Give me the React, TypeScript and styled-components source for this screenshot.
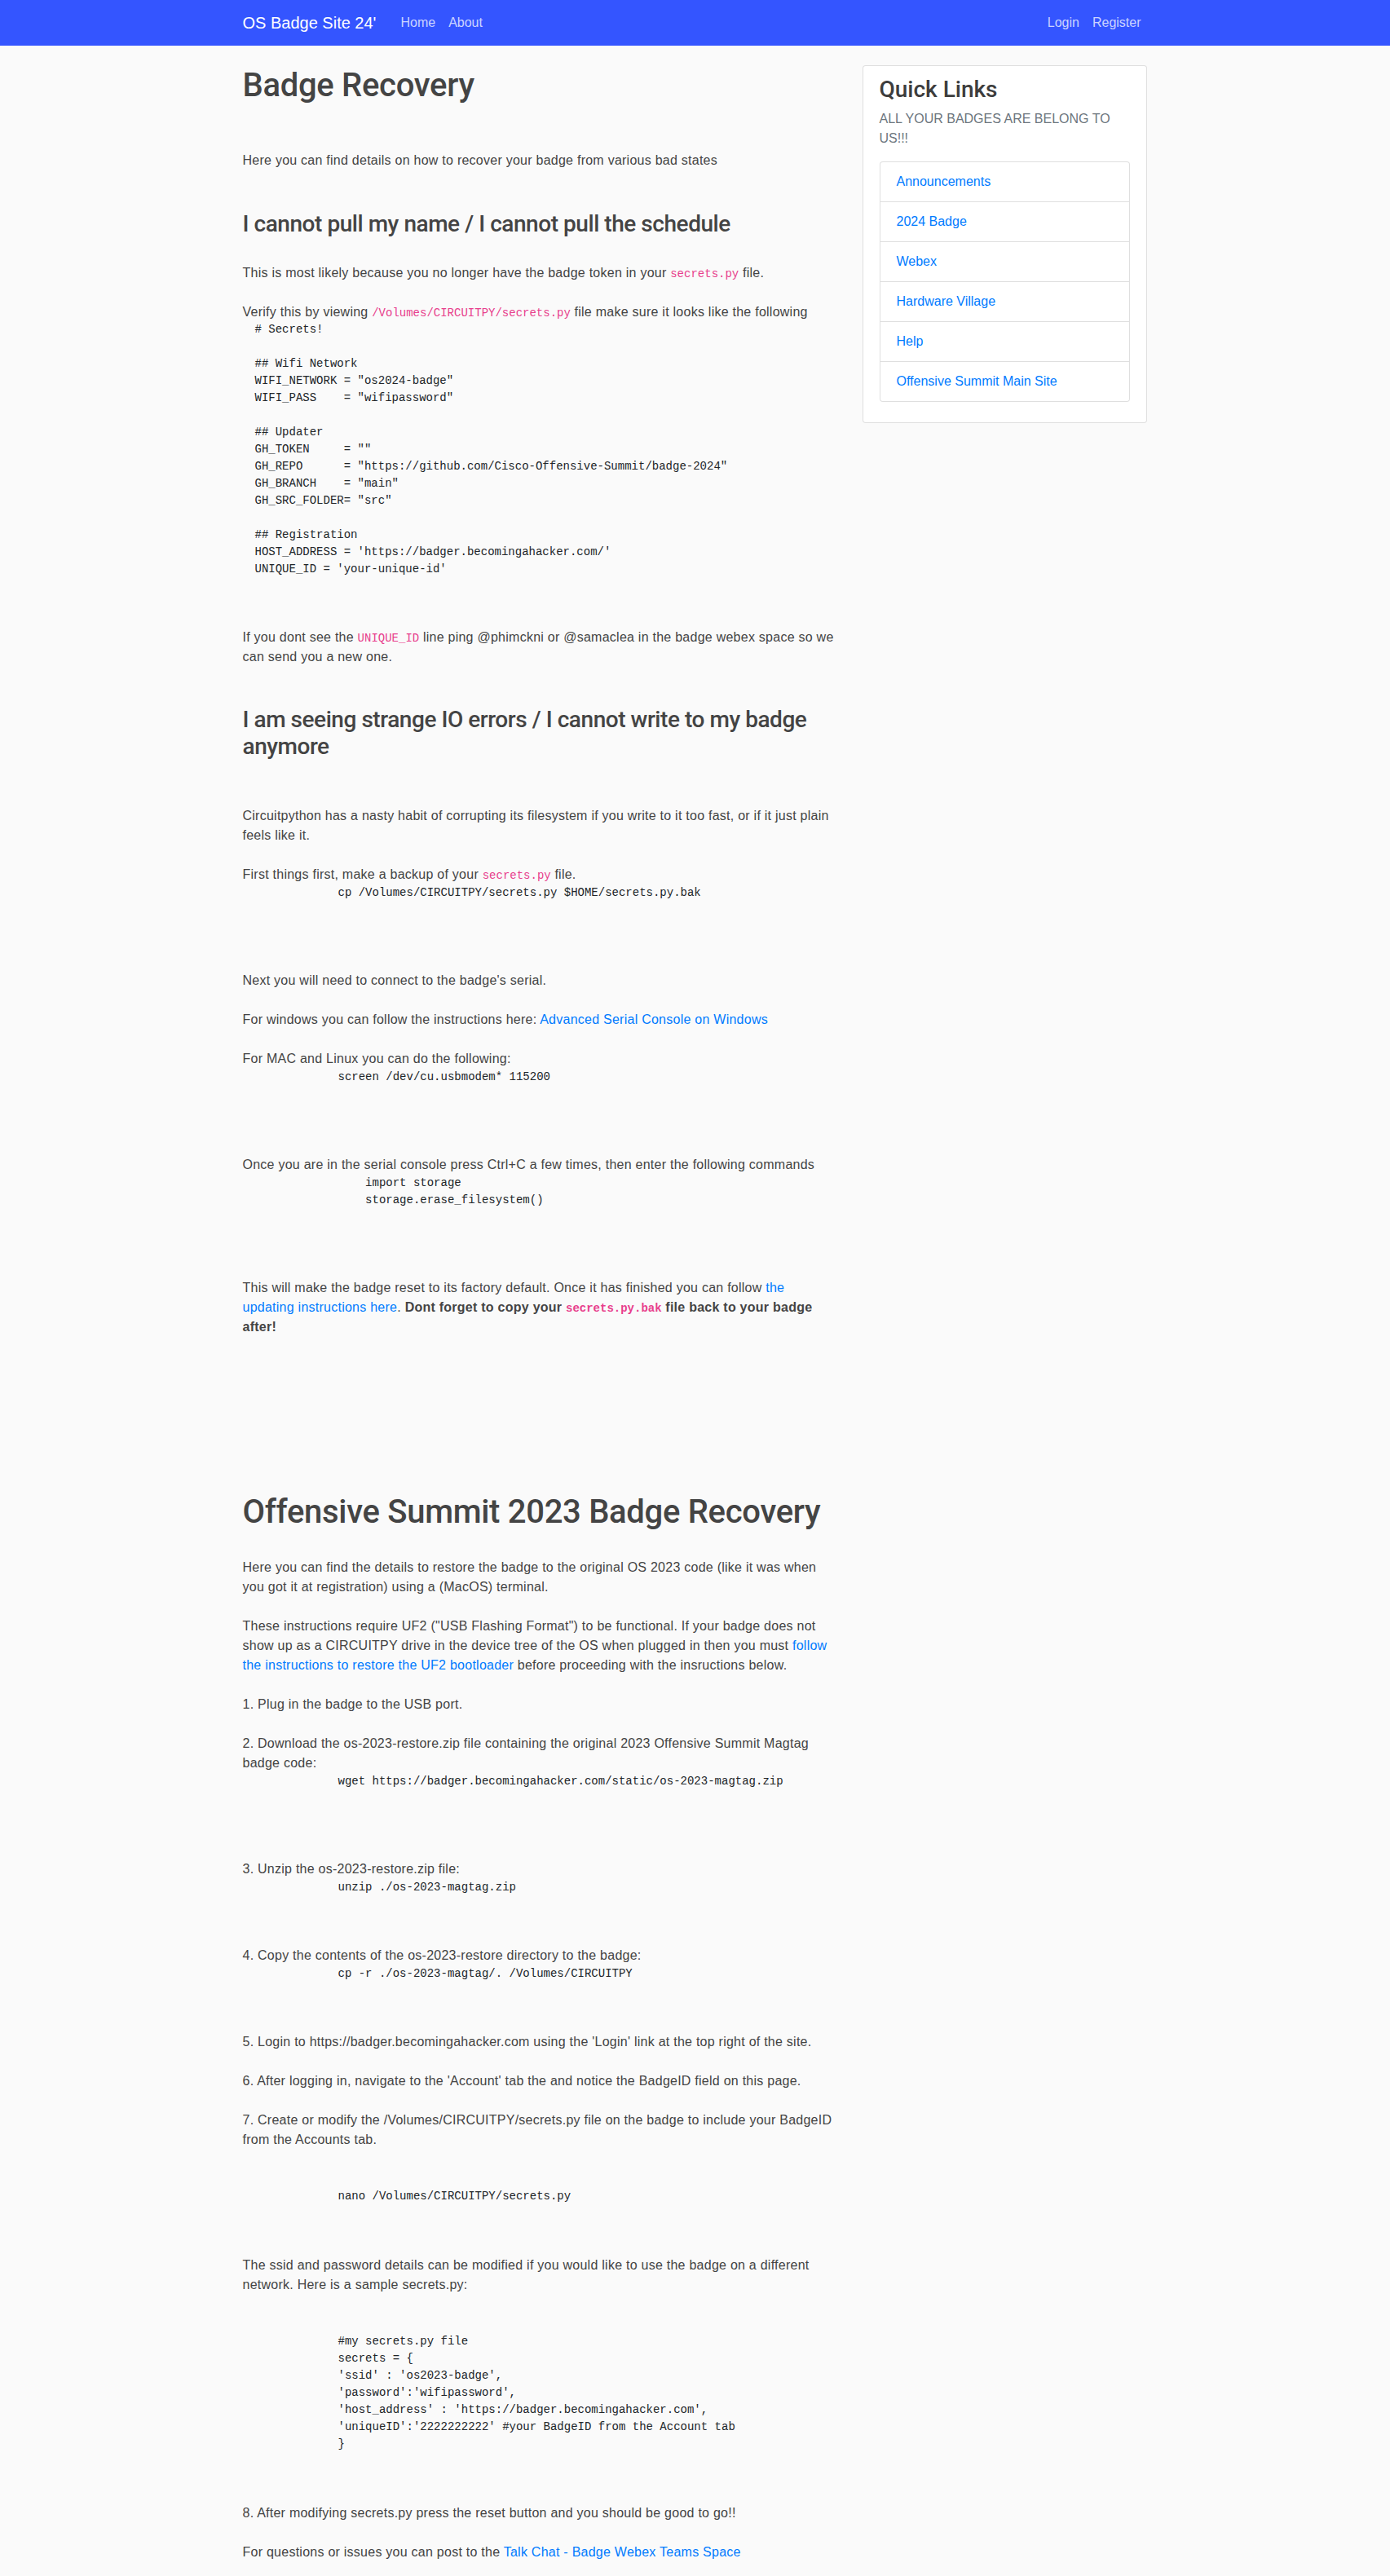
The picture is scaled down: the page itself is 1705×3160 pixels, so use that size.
import React from "react";
import styled, { createGlobalStyle } from "styled-components";

const GlobalStyle = createGlobalStyle`
  *, *::before, *::after { box-sizing: border-box; }
  html, body { margin: 0; padding: 0; }
  body {
    background: #fafafa;
    color: #444;
    font-family: "Liberation Sans", Arial, Helvetica, sans-serif;
    font-size: 16px;
    line-height: 1.5;
  }
`;

const headingFont = `Roboto, "Liberation Sans", Arial, sans-serif`;
const monoFont = `"Liberation Mono", "DejaVu Sans Mono", monospace`;

const Navbar = styled.nav`
  background: #3455ff;
  padding: 8px 0;
`;

const NavInner = styled.div`
  width: 1140px;
  margin: 0 auto;
  padding: 0 15px;
  display: flex;
  align-items: center;
`;

const Brand = styled.a`
  color: #fff;
  font-size: 20px;
  line-height: 30px;
  padding: 5px 0;
  margin-right: 22px;
  text-decoration: none;
`;

const NavList = styled.div<{ $right?: boolean }>`
  display: flex;
  margin-left: ${(p) => (p.$right ? "auto" : "0")};
`;

const NavLink = styled.a`
  color: rgba(255, 255, 255, 0.75);
  padding: 8px;
  line-height: 24px;
  text-decoration: none;
`;

const Container = styled.div`
  width: 1140px;
  margin: 0 auto;
  padding: 0 15px;
`;

const Row = styled.div`
  display: flex;
  margin: 24px -15px 0;
`;

const MainCol = styled.main`
  flex: 0 0 66.6667%;
  max-width: 66.6667%;
  padding: 0 15px 15px;
`;

const SideCol = styled.aside`
  flex: 0 0 33.3333%;
  max-width: 33.3333%;
  padding: 0 15px;
`;

const PageTitle = styled.h1<{ $mt: number }>`
  margin: ${(p) => p.$mt}px 0 0;
  font-family: ${headingFont};
  font-size: 40px;
  font-weight: 500;
  line-height: 1.2;
  letter-spacing: -0.3px;
  color: #444;
`;

const SectionTitle = styled.h3<{ $mt: number }>`
  margin: ${(p) => p.$mt}px 0 0;
  font-family: ${headingFont};
  font-size: 28px;
  font-weight: 500;
  line-height: 1.2;
  letter-spacing: -0.45px;
  color: #444;
`;

const Para = styled.p<{ $mt: number }>`
  margin: ${(p) => p.$mt}px 0 0;
  letter-spacing: 0.25px;
`;

const Code = styled.code`
  font-family: ${monoFont};
  font-size: 87.5%;
  letter-spacing: 0;
  color: #e83e8c;
`;

const CodeBlock = styled.pre<{ $mt: number; $indent: number }>`
  margin: ${(p) => p.$mt}px 0 0;
  padding-left: ${(p) => p.$indent}px;
  font-family: ${monoFont};
  font-size: 14px;
  line-height: 21px;
  color: #212529;
  white-space: pre;
`;

const Link = styled.a`
  color: #007bff;
  text-decoration: none;
`;

const Card = styled.div`
  background: #fff;
  border: 1px solid rgba(0, 0, 0, 0.125);
  border-radius: 4px;
`;

const CardBody = styled.div`
  padding: 12px 20px 25px;
`;

const CardTitle = styled.h3`
  margin: 0 0 7px;
  font-family: ${headingFont};
  font-size: 28px;
  font-weight: 500;
  line-height: 1.2;
  color: #3d3d3d;
`;

const CardText = styled.p`
  margin: 0 0 16px;
  color: #6c757d;
`;

const ListGroup = styled.ul`
  list-style: none;
  margin: 0;
  padding: 0;
`;

const ListItem = styled.li`
  background: #fff;
  border: 1px solid rgba(0, 0, 0, 0.125);
  padding: 12px 20px;
  margin-bottom: -1px;
  &:first-child {
    border-top-left-radius: 4px;
    border-top-right-radius: 4px;
  }
  &:last-child {
    margin-bottom: 0;
    border-bottom-left-radius: 4px;
    border-bottom-right-radius: 4px;
  }
`;

const secrets2024 = `# Secrets!

## Wifi Network
WIFI_NETWORK = "os2024-badge"
WIFI_PASS    = "wifipassword"

## Updater
GH_TOKEN     = ""
GH_REPO      = "https://github.com/Cisco-Offensive-Summit/badge-2024"
GH_BRANCH    = "main"
GH_SRC_FOLDER= "src"

## Registration
HOST_ADDRESS = 'https://badger.becomingahacker.com/'
UNIQUE_ID = 'your-unique-id'`;

const secrets2023 = `#my secrets.py file
secrets = {
'ssid' : 'os2023-badge',
'password':'wifipassword',
'host_address' : 'https://badger.becomingahacker.com',
'uniqueID':'2222222222' #your BadgeID from the Account tab
}`;

const quickLinks = [
  "Announcements",
  "2024 Badge",
  "Webex",
  "Hardware Village",
  "Help",
  "Offensive Summit Main Site",
];

export default function App() {
  return (
    <>
      <GlobalStyle />
      <Navbar>
        <NavInner>
          <Brand href="#">OS Badge Site 24'</Brand>
          <NavList>
            <NavLink href="#">Home</NavLink>
            <NavLink href="#">About</NavLink>
          </NavList>
          <NavList $right>
            <NavLink href="#">Login</NavLink>
            <NavLink href="#">Register</NavLink>
          </NavList>
        </NavInner>
      </Navbar>
      <Container>
        <Row>
          <MainCol>
            <PageTitle $mt={1}>Badge Recovery</PageTitle>
            <Para $mt={56}>
              Here you can find details on how to recover your badge from various bad states
            </Para>
            <SectionTitle $mt={49}>I cannot pull my name / I cannot pull the schedule</SectionTitle>
            <Para $mt={31}>
              This is most likely because you no longer have the badge token in your{" "}
              <Code>secrets.py</Code> file.
            </Para>
            <Para $mt={24}>
              Verify this by viewing <Code>/Volumes/CIRCUITPY/secrets.py</Code> file make sure it
              looks like the following
            </Para>
            <CodeBlock $mt={-1} $indent={15}>{secrets2024}</CodeBlock>
            <Para $mt={61}>
              If you dont see the <Code>UNIQUE_ID</Code> line ping @phimckni or @samaclea in the badge
              webex space so we can send you a new one.
            </Para>
            <SectionTitle $mt={48}>
              I am seeing strange IO errors / I cannot write to my badge anymore
            </SectionTitle>
            <Para $mt={56}>
              Circuitpython has a nasty habit of corrupting its filesystem if you write to it too fast,
              or if it just plain feels like it.
            </Para>
            <Para $mt={24}>
              First things first, make a backup of your <Code>secrets.py</Code> file.
            </Para>
            <CodeBlock $mt={0} $indent={117}>
              cp /Volumes/CIRCUITPY/secrets.py $HOME/secrets.py.bak
            </CodeBlock>
            <Para $mt={85}>Next you will need to connect to the badge's serial.</Para>
            <Para $mt={24}>
              For windows you can follow the instructions here:{" "}
              <Link href="#">Advanced Serial Console on Windows</Link>
            </Para>
            <Para $mt={24}>For MAC and Linux you can do the following:</Para>
            <CodeBlock $mt={0} $indent={117}>
              screen /dev/cu.usbmodem* 115200
            </CodeBlock>
            <Para $mt={85}>
              Once you are in the serial console press Ctrl+C a few times, then enter the following
              commands
            </Para>
            <CodeBlock $mt={0} $indent={117}>{`    import storage
    storage.erase_filesystem()`}</CodeBlock>
            <Para $mt={85}>
              This will make the badge reset to its factory default. Once it has finished you can follow{" "}
              <Link href="#">the updating instructions here</Link>.{" "}
              <strong>
                Dont forget to copy your <Code>secrets.py.bak</Code> file back to your badge after!
              </strong>
            </Para>

            <PageTitle $mt={191}>Offensive Summit 2023 Badge Recovery</PageTitle>
            <Para $mt={32}>
              Here you can find the details to restore the badge to the original OS 2023 code (like it
              was when you got it at registration) using a (MacOS) terminal.
            </Para>
            <Para $mt={24}>
              These instructions require UF2 ("USB Flashing Format") to be functional. If your badge
              does not show up as a CIRCUITPY drive in the device tree of the OS when plugged in then
              you must <Link href="#">follow the instructions to restore the UF2 bootloader</Link>{" "}
              before proceeding with the insructions below.
            </Para>
            <Para $mt={24}>1. Plug in the badge to the USB port.</Para>
            <Para $mt={24}>
              2. Download the os-2023-restore.zip file containing the original 2023 Offensive Summit
              Magtag badge code:
            </Para>
            <CodeBlock $mt={0} $indent={117}>
              wget https://badger.becomingahacker.com/static/os-2023-magtag.zip
            </CodeBlock>
            <Para $mt={85}>3. Unzip the os-2023-restore.zip file:</Para>
            <CodeBlock $mt={0} $indent={117}>
              unzip ./os-2023-magtag.zip
            </CodeBlock>
            <Para $mt={61}>4. Copy the contents of the os-2023-restore directory to the badge:</Para>
            <CodeBlock $mt={0} $indent={117}>
              cp -r ./os-2023-magtag/. /Volumes/CIRCUITPY
            </CodeBlock>
            <Para $mt={61}>
              5. Login to https://badger.becomingahacker.com using the 'Login' link at the top right of
              the site.
            </Para>
            <Para $mt={24}>
              6. After logging in, navigate to the 'Account' tab the and notice the BadgeID field on
              this page.
            </Para>
            <Para $mt={24}>
              7. Create or modify the /Volumes/CIRCUITPY/secrets.py file on the badge to include your
              BadgeID from the Accounts tab.
            </Para>
            <CodeBlock $mt={47} $indent={117}>
              nano /Volumes/CIRCUITPY/secrets.py
            </CodeBlock>
            <Para $mt={62}>
              The ssid and password details can be modified if you would like to use the badge on a
              different network. Here is a sample secrets.py:
            </Para>
            <CodeBlock $mt={47} $indent={117}>{secrets2023}</CodeBlock>
            <Para $mt={62}>
              8. After modifying secrets.py press the reset button and you should be good to go!!
            </Para>
            <Para $mt={24}>
              For questions or issues you can post to the{" "}
              <Link href="#">Talk Chat - Badge Webex Teams Space</Link>
            </Para>
          </MainCol>
          <SideCol>
            <Card>
              <CardBody>
                <CardTitle>Quick Links</CardTitle>
                <CardText>ALL YOUR BADGES ARE BELONG TO US!!!</CardText>
                <ListGroup>
                  {quickLinks.map((label) => (
                    <ListItem key={label}>
                      <Link href="#">{label}</Link>
                    </ListItem>
                  ))}
                </ListGroup>
              </CardBody>
            </Card>
          </SideCol>
        </Row>
      </Container>
    </>
  );
}
